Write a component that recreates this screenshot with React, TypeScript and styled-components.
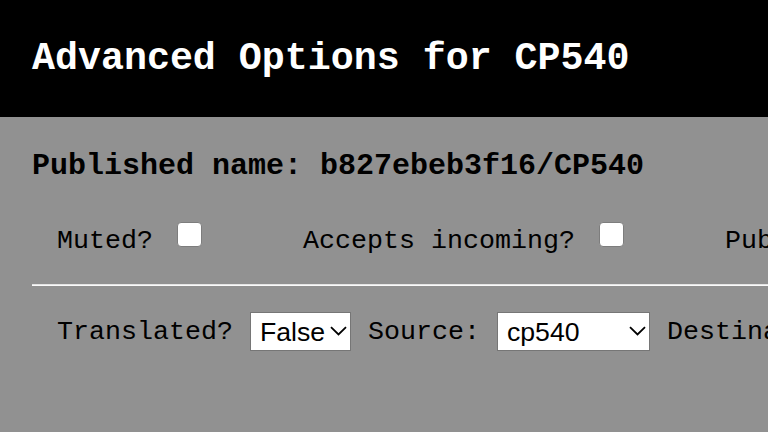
import styled, { createGlobalStyle } from 'styled-components';

const GlobalStyle = createGlobalStyle`
  html, body {
    margin: 0;
    padding: 0;
    overflow: hidden;
    background-color: #919191;
    font-family: "Liberation Mono", "Courier New", monospace;
  }
`;

const encodings = ['cp540', 'cp500', 'cp600', 'cp440'];

function Dropdown({ id, width, options }: { id: string; width: number; options: string[] }) {
  return (
    <StyledSelectWrap>
      <StyledSelect id={id} $width={width} defaultValue={options[0]}>
        {options.map((o) => (
          <option key={o}>{o}</option>
        ))}
      </StyledSelect>
      <StyledChevron width="17" height="10" viewBox="0 0 17 10">
        <path d="M1 1.2 L8.5 8.5 L16 1.2" fill="none" stroke="#000" strokeWidth="1.8" />
      </StyledChevron>
    </StyledSelectWrap>
  );
}

export default function App() {
  return (
    <>
      <GlobalStyle />
      <StyledPage>
        <StyledHeader>
          <StyledTitle>Advanced Options for CP540</StyledTitle>
        </StyledHeader>
        <StyledMain>
          <StyledName>Published name: b827ebeb3f16/CP540</StyledName>
          <StyledRow>
            <StyledField>
              <StyledLabel htmlFor="muted">Muted?</StyledLabel>
              <StyledCheckbox id="muted" type="checkbox" />
            </StyledField>
            <StyledField>
              <StyledLabel htmlFor="incoming">Accepts incoming?</StyledLabel>
              <StyledCheckbox id="incoming" type="checkbox" />
            </StyledField>
            <StyledField>
              <StyledLabel htmlFor="public">Publicly listed?</StyledLabel>
              <StyledCheckbox id="public" type="checkbox" />
            </StyledField>
          </StyledRow>
          <StyledDivider />
          <StyledSelectRow>
            <StyledLabel htmlFor="translated">Translated?</StyledLabel>
            <Dropdown id="translated" width={101} options={['False', 'True']} />
            <StyledLabel htmlFor="source">Source:</StyledLabel>
            <Dropdown id="source" width={153} options={encodings} />
            <StyledLabel htmlFor="dest">Destination:</StyledLabel>
            <Dropdown id="dest" width={153} options={encodings} />
          </StyledSelectRow>
        </StyledMain>
      </StyledPage>
    </>
  );
}

const StyledPage = styled.div`
  min-height: 100vh;
  width: max-content;
  min-width: 100vw;
  background-color: #919191;
`;

const StyledHeader = styled.header`
  background-color: #000;
  height: 117px;
  padding: 0 32px;
  display: flex;
  align-items: center;
`;

const StyledTitle = styled.h1`
  margin: 0;
  color: #fff;
  font-size: 38.3px;
  font-weight: 700;
  white-space: nowrap;
`;

const StyledMain = styled.main`
  padding: 32px 0 0 32px;
`;

const StyledName = styled.h2`
  margin: 0;
  font-size: 30px;
  font-weight: 700;
  color: #000;
  white-space: nowrap;
`;

const StyledRow = styled.div`
  display: flex;
  align-items: center;
  gap: 101px;
  padding: 38px 0 0 25px;
  height: 40px;
`;

const StyledField = styled.div`
  display: flex;
  align-items: center;
  gap: 24px;
`;

const StyledLabel = styled.label`
  font-size: 26.67px;
  color: #000;
  white-space: nowrap;
`;

const StyledCheckbox = styled.input`
  appearance: none;
  margin: -14px 0 0 0;
  width: 25px;
  height: 25px;
  background-color: #fff;
  border: 1px solid #7d7d7d;
  border-radius: 4px;
  box-sizing: border-box;
`;

const StyledDivider = styled.hr`
  margin: 23px 0 0 0;
  height: 0;
  border: none;
  border-top: 1px solid #e4e4e4;
  border-bottom: 1px solid #fafafa;
`;

const StyledSelectRow = styled.div`
  display: flex;
  align-items: center;
  gap: 17px;
  padding: 26px 0 0 25px;
`;

const StyledSelectWrap = styled.div`
  position: relative;
  display: flex;
`;

const StyledSelect = styled.select<{ $width: number }>`
  appearance: none;
  box-sizing: border-box;
  width: ${(p) => p.$width}px;
  height: 39px;
  font-family: "Liberation Sans", Arial, sans-serif;
  font-size: 26.67px;
  color: #000;
  background-color: #fff;
  border: 1px solid #767676;
  border-radius: 0;
  padding: 0 24px 0 9px;
  margin: 0;
`;

const StyledChevron = styled.svg`
  position: absolute;
  right: 4px;
  top: 14px;
  pointer-events: none;
`;
